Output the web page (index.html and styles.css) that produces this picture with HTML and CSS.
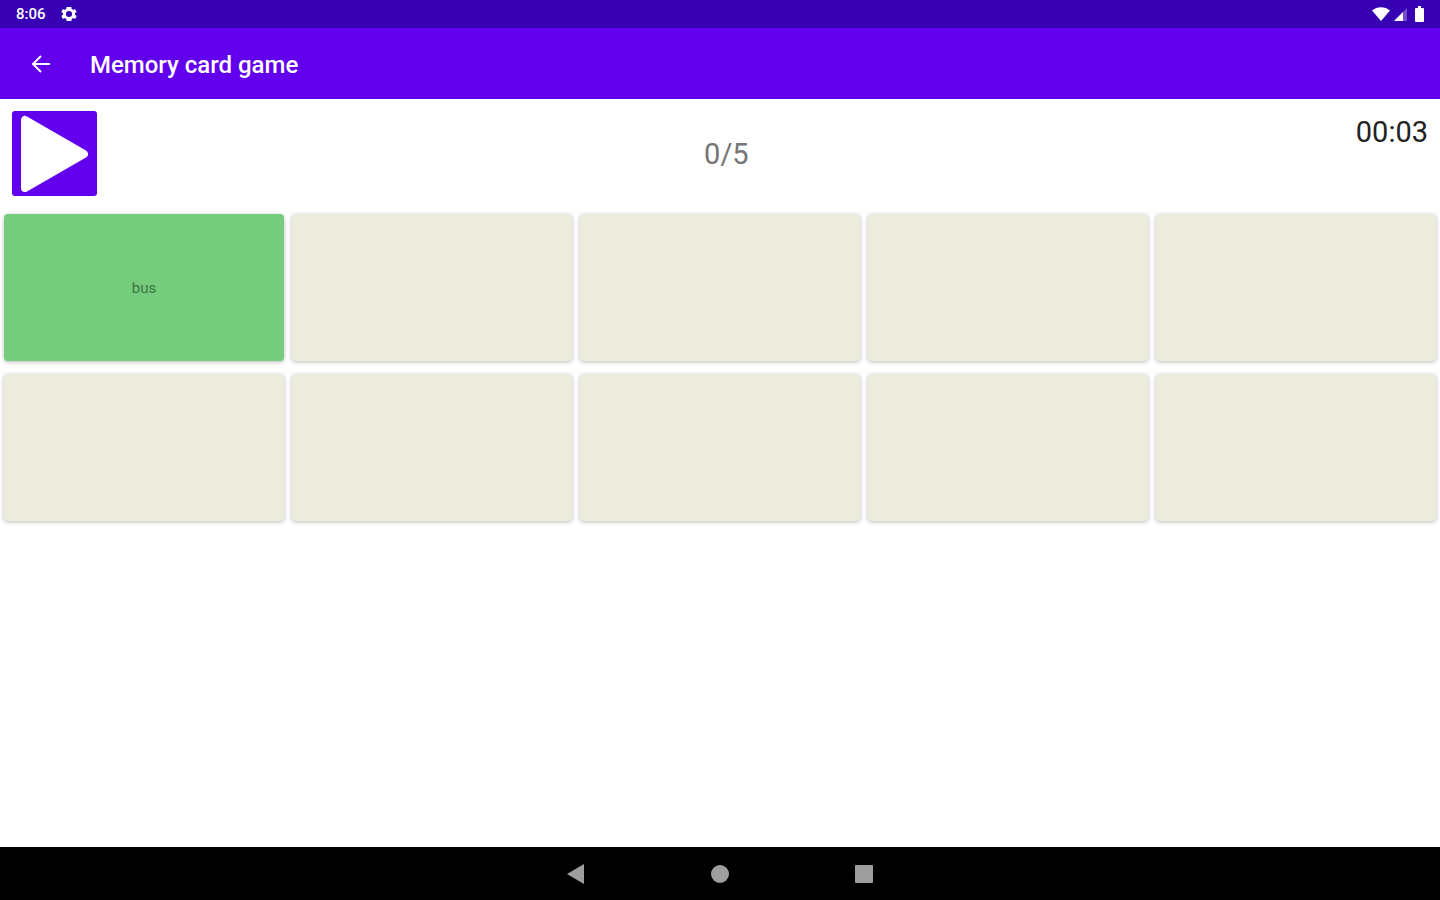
FILE: index.html
```html
<!DOCTYPE html>
<html lang="en">
  <head>
    <meta charset="UTF-8" />
    <meta name="viewport" content="width=device-width, initial-scale=1.0" />
    <title>Memory card game</title>
    <link rel="stylesheet" href="styles.css">
  </head>
  <body>
    <div class="status-bar">
      <span class="clock">8:06</span>
      <svg class="gear" viewBox="2 2 20 20" aria-hidden="true">
        <path fill-rule="evenodd" d="M19.4 13a7.5 7.5 0 0 0 0-2l2.1-1.6-2-3.5-2.5 1a7.3 7.3 0 0 0-1.700-1L15 3.200h-6l-.4 2.700a7.300 7.300 0 0 0-1.700 1l-2.500-1-2 3.500L4.500 11a7.500 7.500 0 0 0 0 2l-2.100 1.600 2 3.500 2.500-1a7.300 7.300 0 0 0 1.700 1l.4 2.700h6l.4-2.700a7.300 7.300 0 0 0 1.700-1l2.500 1 2-3.500zM12 15.800a3.800 3.800 0 1 1 0-7.600 3.800 3.800 0 0 1 0 7.600z" />
      </svg>
      <div class="status-icons">
        <svg class="wifi" viewBox="0 0 18 14" aria-hidden="true">
          <path d="M9 14L0 3.500C5-1 13-1 18 3.500z" />
        </svg>
        <svg class="signal" viewBox="0 0 13 13" aria-hidden="true">
          <path class="faint" d="M0 13L13 0v13z" />
          <path d="M0 13L9 4v9z" />
        </svg>
        <svg class="battery" viewBox="0 0 9 16" aria-hidden="true">
          <path d="M3 0h3v2h2q1 0 1 1v12q0 1-1 1H1q-1 0-1-1V3q0-1 1-1h2z" />
        </svg>
      </div>
    </div>

    <header class="app-bar">
      <button class="back" aria-label="Back">
        <svg viewBox="0 0 20 20" aria-hidden="true">
          <path d="M19 9H2M10 1L2 9l8 8" />
        </svg>
      </button>
      <h1>Memory card game</h1>
    </header>

    <main>
      <div class="controls">
        <button class="play" aria-label="Play">
          <svg viewBox="0 0 85 85" aria-hidden="true">
            <path d="M13 9v68l59-34z" />
          </svg>
        </button>
        <div class="score">0/5</div>
        <div class="timer">00:03</div>
      </div>

      <div class="cards">
        <button class="card open">bus</button>
        <button class="card" aria-label="Card 2"></button>
        <button class="card" aria-label="Card 3"></button>
        <button class="card" aria-label="Card 4"></button>
        <button class="card" aria-label="Card 5"></button>
        <button class="card" aria-label="Card 6"></button>
        <button class="card" aria-label="Card 7"></button>
        <button class="card" aria-label="Card 8"></button>
        <button class="card" aria-label="Card 9"></button>
        <button class="card" aria-label="Card 10"></button>
      </div>
    </main>

    <nav class="nav-bar">
      <button aria-label="Back">
        <svg viewBox="0 0 20 20" aria-hidden="true"><path d="M1 10L18 0v20z" /></svg>
      </button>
      <button aria-label="Home">
        <svg viewBox="0 0 20 20" aria-hidden="true"><circle cx="10" cy="10" r="9" /></svg>
      </button>
      <button aria-label="Recent apps">
        <svg viewBox="0 0 20 20" aria-hidden="true"><rect x="1" y="1" width="18" height="18" rx="1" /></svg>
      </button>
    </nav>
  </body>
</html>
```

FILE: styles.css
```css
*,
*::before,
*::after {
  box-sizing: border-box;
  padding: 0;
  margin: 0;
}
body {
  min-height: 100vh;
  display: flex;
  flex-direction: column;
  background: #fff;
  font-family: Roboto, sans-serif;
}
button {
  border: none;
  background: none;
  font-family: inherit;
  cursor: pointer;
}
svg {
  display: block;
}
.status-bar {
  height: 28px;
  padding: 0 16px;
  display: flex;
  align-items: center;
  gap: 15px;
  background: #3700b3;
  color: #fff;
}
.status-bar svg {
  fill: #fff;
}
.clock {
  font-size: 15px;
  font-weight: 500;
}
.gear {
  width: 16px;
  height: 16px;
}
.status-icons {
  margin-left: auto;
  display: flex;
  align-items: center;
  gap: 4px;
}
.wifi {
  width: 18px;
  height: 14px;
}
.signal {
  width: 13px;
  height: 13px;
}
.signal .faint {
  opacity: 0.3;
}
.battery {
  width: 9px;
  height: 16px;
  margin-left: 4px;
}
.app-bar {
  height: 71px;
  padding: 2px 31px 0;
  display: flex;
  align-items: center;
  gap: 39px;
  background: #6200ee;
  color: #fff;
}
.back svg {
  width: 20px;
  height: 20px;
  fill: none;
  stroke: #fff;
  stroke-width: 2;
}
h1 {
  font-size: 24px;
  font-weight: 500;
}
main {
  flex: 1;
}
.controls {
  padding: 12px 12px 18px;
  display: flex;
  align-items: center;
}
.play {
  width: 85px;
  height: 85px;
  border-radius: 3px;
  background: #6200ee;
}
.play svg {
  width: 100%;
  fill: #fff;
  stroke: #fff;
  stroke-width: 8;
  stroke-linejoin: round;
}
.score {
  flex: 1;
  text-align: center;
  font-size: 29px;
  color: #757575;
}
.timer {
  align-self: flex-start;
  padding-top: 4px;
  font-size: 29px;
  color: #222;
}
.cards {
  padding: 0 4px;
  display: grid;
  grid-template-columns: repeat(5, 1fr);
  gap: 13px 8px;
}
.card {
  height: 147px;
  border-radius: 4px;
  background: #ecebdc;
  box-shadow: 0 1px 4px rgba(0, 0, 0, 0.28);
  font-size: 15px;
  color: #3d7442;
}
.card.open {
  background: #74cc7c;
}
.nav-bar {
  height: 53px;
  display: flex;
  justify-content: center;
  align-items: center;
  gap: 124px;
  background: #000;
}
.nav-bar svg {
  width: 20px;
  height: 20px;
  fill: #9e9e9e;
}
```
